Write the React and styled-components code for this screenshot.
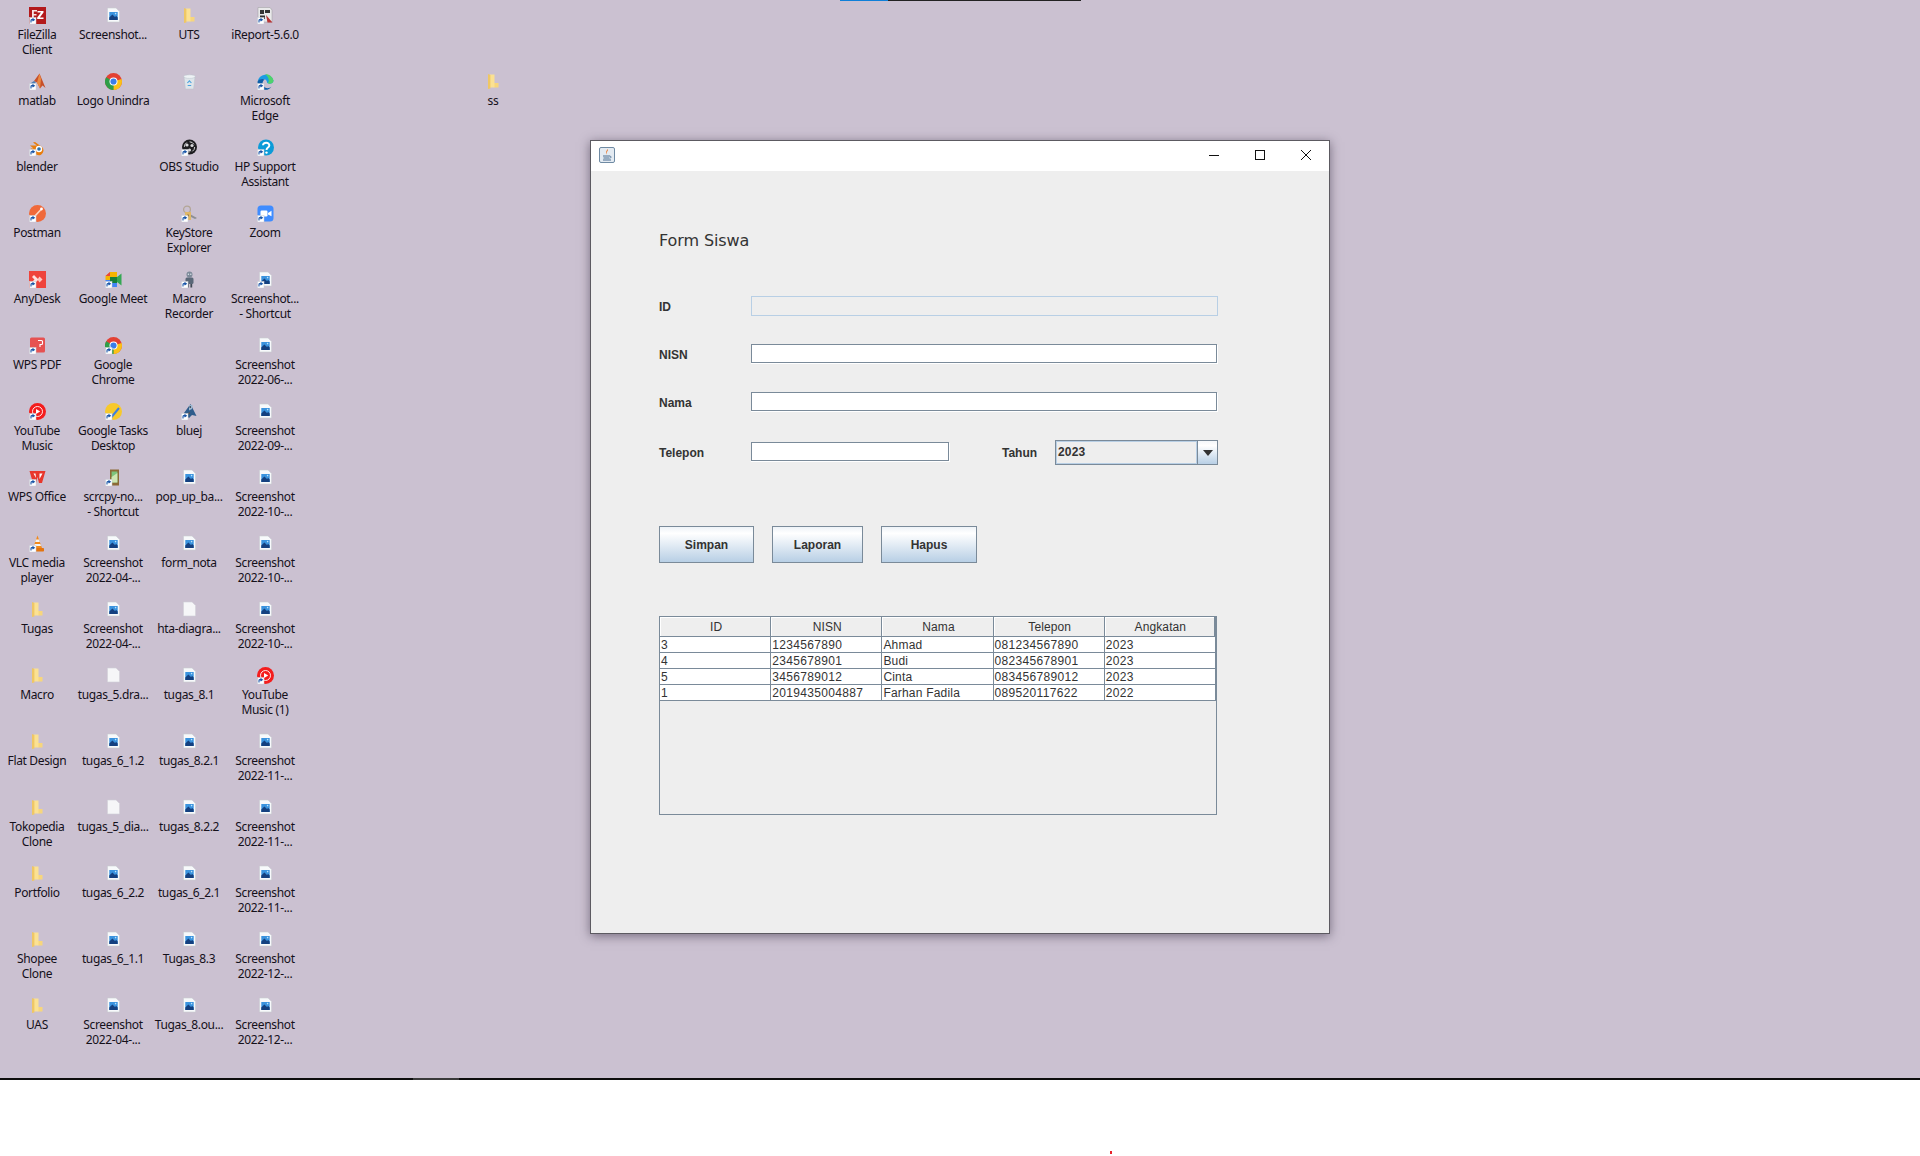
import React from 'react';
import styled, { createGlobalStyle } from 'styled-components';

const GlobalStyle = createGlobalStyle`
  html, body {
    margin: 0;
    padding: 0;
    background: #fff;
  }
  body {
    width: 1920px;
    height: 1156px;
    overflow: hidden;
    font-family: 'Liberation Sans', Arial, sans-serif;
  }
`;

const Shortcut = () => (
  <g>
    <rect x="0.5" y="10.5" width="6.5" height="6.5" fill="#fff" stroke="#c8ccd4" strokeWidth="0.5" />
    <path d="M2 15.5 V13.5 Q2 12.6 3 12.6 H4.2 M3.5 11.4 L5.3 12.7 L3.5 14" fill="none" stroke="#1a56a8" strokeWidth="1.1" />
  </g>
);

const ImageFile = () => (
  <g>
    <path d="M2.5 1 H11 L14.5 4.5 V15 H2.5 Z" fill="#f7f9fb" stroke="#c9ccd2" strokeWidth="0.6" />
    <rect x="4.3" y="5" width="8.4" height="8" fill="#3a93de" />
    <path d="M4.3 13 V10.5 L7.4 7.6 L10 10 L11.2 9 L12.7 10.4 V13 Z" fill="#14407f" />
    <circle cx="10.6" cy="6.6" r="0.8" fill="#bfe3fa" />
  </g>
);

const BlankFile = () => (
  <path d="M2.5 1 H11 L14.5 4.5 V15 H2.5 Z" fill="#f6f6f8" stroke="#d2d2d8" strokeWidth="0.6" />
);

const Folder = () => (
  <g>
    <path d="M9 10 H13.5 V14.5 H9 Z" fill="#f7d67c" />
    <path d="M5 1.5 H9.5 V14.5 H5 Z" fill="#fbe193" />
    <path d="M3 1 L5.4 2 V15.4 L3 16 Z" fill="#efc765" />
  </g>
);

const drawings = {
  image: <ImageFile />,
  blank: <BlankFile />,
  folder: <Folder />,
  filezilla: (
    <g>
      <rect x="0" y="0" width="17" height="17" fill="#b3191b" />
      <path d="M3 3 H8 V4.5 H4.8 V7 H7.5 V8.5 H4.8 V12 H3 Z" fill="#f8e3e3" />
      <path d="M8.5 4 H14.5 V5.4 L10.8 10.5 H14.5 V12 H8.2 V10.6 L12 5.5 H8.5 Z" fill="#fff" />
    </g>
  ),
  ireport: (
    <g>
      <path d="M1 0.5 H13 L15 3 V15 H1 Z" fill="#e9e9ea" stroke="#9a9a9d" strokeWidth="0.5" />
      <path d="M3 3 H7 V7 H3 Z M8 3 H13 V6 H8 Z M3 8.5 H8 V12 H3 Z" fill="#333" />
      <path d="M9 8 L15.5 15.5 H10.5 Z" fill="#b83434" />
    </g>
  ),
  matlab: (
    <g>
      <path d="M0.5 11 L5 8 L7 9 L4 12.5 Z" fill="#4a7fb5" />
      <path d="M5 8 L10.5 0.5 L16.5 15 L13.5 12.5 L11 15.5 L8 9.5 Z" fill="#c8502a" />
      <path d="M10.5 0.5 L8 9.5 L11 15.5 L12 6 Z" fill="#e98a42" />
    </g>
  ),
  chrome: (
    <g>
      <circle cx="8.5" cy="8.5" r="8.5" fill="#e34133" />
      <path d="M8.5 8.5 L16.6 6 A8.5 8.5 0 0 1 8 17 Z" fill="#fbc116" />
      <path d="M8.5 8.5 L8.6 17 A8.5 8.5 0 0 1 1.2 4.2 Z" fill="#2f9e48" />
      <circle cx="8.5" cy="8.5" r="4" fill="#fff" />
      <circle cx="8.5" cy="8.5" r="3.1" fill="#3a7de8" />
    </g>
  ),
  recycle: (
    <g>
      <path d="M3 4 H14 L12.6 16 H4.4 Z" fill="#dfe5ea" stroke="#b9c2ca" strokeWidth="0.5" />
      <ellipse cx="8.5" cy="3.6" rx="5.8" ry="1.8" fill="#eef2f5" stroke="#b9c2ca" strokeWidth="0.5" />
      <path d="M6.4 10 L8.4 7.8 L10.4 10 M6.7 12.5 H10.2" fill="none" stroke="#4aa3df" strokeWidth="1.1" />
    </g>
  ),
  edge: (
    <g>
      <path d="M0.5 9 A8.2 8.2 0 0 1 16.5 7.5 C16.5 11 11 11.5 10 9.5 C10 7 8 5.5 5.5 6 C3 6.5 1 7.5 0.5 9 Z" fill="#1b9de2" />
      <path d="M8 1 A8.2 8.2 0 0 1 16.5 7.5 C16.5 11 12 11.4 10.5 10 C13 9 12 4 8 1 Z" fill="#4fd26b" />
      <path d="M0.5 9 C1 6.5 5 5 8 6.5 C5 7.5 4.6 12 8 14.5 C10.5 16 13 15 14.5 13.5 C12.5 17 8.5 17.5 5.5 16.2 C2.5 15 0.5 12.5 0.5 9 Z" fill="#0e5ea8" />
    </g>
  ),
  blender: (
    <g>
      <path d="M1 6.5 H8 L4 3.5 L6 3 L13 8 A4.8 4.8 0 1 1 5 12.5 L1.5 9.5 H4.5 Z" fill="#e87d0d" />
      <circle cx="10" cy="10" r="3.2" fill="#fff" />
      <circle cx="10" cy="10" r="1.8" fill="#2c6fa8" />
    </g>
  ),
  obs: (
    <g>
      <circle cx="8.5" cy="8" r="7.5" fill="#1d1d20" />
      <circle cx="8.5" cy="8" r="5.2" fill="none" stroke="#e4e4e6" strokeWidth="0.9" strokeDasharray="5 3" />
      <circle cx="6" cy="6" r="1.6" fill="#d8d8da" />
      <circle cx="11" cy="6.5" r="1.6" fill="#d8d8da" />
      <circle cx="8.5" cy="11" r="1.6" fill="#d8d8da" />
    </g>
  ),
  hp: (
    <g>
      <circle cx="9" cy="8.5" r="8" fill="#0c9bd8" />
      <path d="M6 6.3 C6 2.8 12.5 2.8 12.3 6.5 C12.2 8.6 9.6 8.6 9.5 11" fill="none" stroke="#fff" strokeWidth="2" />
      <circle cx="9.5" cy="13.6" r="1.2" fill="#fff" />
    </g>
  ),
  postman: (
    <g>
      <circle cx="8.5" cy="8.5" r="8.5" fill="#f0693a" />
      <path d="M5 12 L12.5 4" stroke="#fbd7c6" strokeWidth="1.6" />
      <circle cx="12.5" cy="4" r="1.4" fill="#fff" />
    </g>
  ),
  keystore: (
    <g>
      <circle cx="6" cy="4.5" r="3.4" fill="none" stroke="#b3a696" strokeWidth="1.3" />
      <path d="M7 8 L16 13 L14 14 L6 10 Z" fill="#8d8f92" />
      <path d="M4 7 H10 V15 H4 Z" fill="#e0b868" />
      <circle cx="7" cy="10.5" r="1" fill="#7e5f24" />
    </g>
  ),
  zoom: (
    <g>
      <rect x="0.5" y="0.5" width="16" height="16" rx="3.5" fill="#3f8cff" />
      <rect x="3.5" y="5.5" width="7" height="6" rx="1.2" fill="#fff" />
      <path d="M11 8 L14.5 5.8 V11.2 L11 9.4 Z" fill="#fff" />
    </g>
  ),
  anydesk: (
    <g>
      <rect x="0" y="0" width="17" height="17" fill="#ef443b" />
      <path d="M5 4 L9.5 8.5 L5 13 L3 11 L5.5 8.5 L3 6 Z" fill="#fff" opacity="0.85" />
      <path d="M10.5 5.5 L13.5 8.5 L10.5 11.5 L8.5 8.5 Z" fill="#ffc9c4" />
    </g>
  ),
  meet: (
    <g>
      <path d="M0.5 5 L5 1 H12 V6 H5 V9 H0.5 Z" fill="#f4b400" />
      <path d="M0.5 5 L5 1 V5 Z" fill="#e8453c" />
      <path d="M0.5 9 H5 V12 H12 V16 H3 Q0.5 16 0.5 13.5 Z" fill="#4285f4" />
      <path d="M12 6 L16.5 2.5 V14.5 L12 11 Z" fill="#34a853" />
      <rect x="5" y="6" width="7" height="6" fill="#188038" />
    </g>
  ),
  macro: (
    <g>
      <circle cx="8.5" cy="3.5" r="3" fill="#7d8a99" />
      <rect x="4.5" y="6.5" width="8" height="6.5" rx="1.5" fill="#5a6878" />
      <rect x="6" y="13" width="1.8" height="3.5" fill="#404a55" />
      <rect x="9.4" y="13" width="1.8" height="3.5" fill="#404a55" />
      <circle cx="7.4" cy="3.2" r="0.7" fill="#dfe7ee" />
      <circle cx="9.8" cy="3.2" r="0.7" fill="#dfe7ee" />
    </g>
  ),
  wpspdf: (
    <g>
      <rect x="1" y="0.5" width="15" height="15" rx="1.5" fill="#e65252" />
      <path d="M9 3.5 H12.5 Q13.5 3.5 13.5 4.5 V6.5 Q13.5 7.5 12.5 7.5 H11 V10" fill="none" stroke="#fff" strokeWidth="1.1" />
    </g>
  ),
  ytmusic: (
    <g>
      <circle cx="8.5" cy="8.5" r="8.5" fill="#f41d1d" />
      <circle cx="8.5" cy="8.5" r="5" fill="none" stroke="#fff" strokeWidth="0.9" />
      <path d="M7 6 L11.2 8.5 L7 11 Z" fill="#fff" />
    </g>
  ),
  tasks: (
    <g>
      <circle cx="8.5" cy="8.5" r="8.5" fill="#f7c92b" />
      <path d="M3.5 12 L7 13.5 L14 5" fill="none" stroke="#3f7fe0" strokeWidth="2" />
    </g>
  ),
  bluej: (
    <g>
      <path d="M3 10 L9.5 1 L15.5 13 L11 12 L8 15 Z" fill="#2f5d8c" />
      <path d="M8 2 H11.5 L11 6 L8 7.5 Z" fill="#9ab7d1" />
      <circle cx="9.2" cy="4" r="0.8" fill="#111" />
      <path d="M3 12 L9 9 V11 Z" fill="#555" />
    </g>
  ),
  wps: (
    <g>
      <path d="M0.5 2 H16.5 L13 14 H10 L8.5 8 L7 14 H4 Z" fill="#e8372c" />
      <path d="M4.5 4.5 H6.5 L7 9 Z M10.5 4.5 H13.5 L10.5 10 Z" fill="#fff" />
    </g>
  ),
  scrcpy: (
    <g>
      <rect x="5" y="0.5" width="9" height="16" fill="#8c6a36" />
      <rect x="6.6" y="2.5" width="5.8" height="11" fill="#7cc47c" />
      <path d="M6.6 8 L12.4 4 V13.5 H6.6 Z" fill="#cfe6b4" />
    </g>
  ),
  vlc: (
    <g>
      <path d="M8.5 0.5 L13 13 H4 Z" fill="#f28a1c" />
      <path d="M7 4.5 H10 L10.8 7 H6.2 Z M5.6 9 H11.4 L12 11 H5 Z" fill="#f3f3f3" />
      <rect x="2" y="13" width="13" height="3.5" rx="0.8" fill="#e3740f" />
    </g>
  ),
};

const noShortcut = new Set(['image', 'blank', 'folder', 'recycle']);

const icon = (kind, label, plain) => ({ kind, label, plain });
const shot = (date) => icon('image', `Screenshot\n2022-${date}-...`);

const rows = [
  [icon('filezilla', 'FileZilla\nClient'), icon('image', 'Screenshot...'), icon('folder', 'UTS'), icon('ireport', 'iReport-5.6.0')],
  [icon('matlab', 'matlab'), icon('chrome', 'Logo Unindra', true), icon('recycle', ''), icon('edge', 'Microsoft\nEdge')],
  [icon('blender', 'blender'), null, icon('obs', 'OBS Studio'), icon('hp', 'HP Support\nAssistant')],
  [icon('postman', 'Postman'), null, icon('keystore', 'KeyStore\nExplorer'), icon('zoom', 'Zoom')],
  [icon('anydesk', 'AnyDesk'), icon('meet', 'Google Meet'), icon('macro', 'Macro\nRecorder'), { ...icon('image', 'Screenshot...\n- Shortcut'), forced: true }],
  [icon('wpspdf', 'WPS PDF'), icon('chrome', 'Google\nChrome'), null, shot('06')],
  [icon('ytmusic', 'YouTube\nMusic'), icon('tasks', 'Google Tasks\nDesktop'), icon('bluej', 'bluej'), shot('09')],
  [icon('wps', 'WPS Office'), icon('scrcpy', 'scrcpy-no...\n- Shortcut'), icon('image', 'pop_up_ba...'), shot('10')],
  [icon('vlc', 'VLC media\nplayer'), shot('04'), icon('image', 'form_nota'), shot('10')],
  [icon('folder', 'Tugas'), shot('04'), icon('blank', 'hta-diagra...'), shot('10')],
  [icon('folder', 'Macro'), icon('blank', 'tugas_5.dra...'), icon('image', 'tugas_8.1'), icon('ytmusic', 'YouTube\nMusic (1)')],
  [icon('folder', 'Flat Design'), icon('image', 'tugas_6_1.2'), icon('image', 'tugas_8.2.1'), shot('11')],
  [icon('folder', 'Tokopedia\nClone'), icon('blank', 'tugas_5_dia...'), icon('image', 'tugas_8.2.2'), shot('11')],
  [icon('folder', 'Portfolio'), icon('image', 'tugas_6_2.2'), icon('image', 'tugas_6_2.1'), shot('11')],
  [icon('folder', 'Shopee\nClone'), icon('image', 'tugas_6_1.1'), icon('image', 'Tugas_8.3'), shot('12')],
  [icon('folder', 'UAS'), shot('04'), icon('image', 'Tugas_8.ou...'), shot('12')],
];

const students = [
  ['3', '1234567890', 'Ahmad', '081234567890', '2023'],
  ['4', '2345678901', 'Budi', '082345678901', '2023'],
  ['5', '3456789012', 'Cinta', '083456789012', '2023'],
  ['1', '2019435004887', 'Farhan Fadila', '089520117622', '2022'],
];

const Page = styled.div`
  width: 1920px;
  height: 1156px;
  display: flex;
  flex-direction: column;
`;

const Desktop = styled.div`
  position: relative;
  height: 1078px;
  background: #cbc1d1;
  overflow: hidden;
`;

const TopStrip = styled.div`
  position: absolute;
  top: 0;
  left: 840px;
  width: 241px;
  height: 1px;
  background: linear-gradient(to right, #0f7fd8 48px, #222 48px);
`;

const IconGrid = styled.div`
  display: grid;
  margin-left: -1px;
  grid-template-columns: repeat(7, 76px);
  grid-auto-rows: 66px;
`;

const DesktopIcon = styled.div`
  grid-column: ${(p) => p.$col};
  grid-row: ${(p) => p.$row};
  display: flex;
  flex-direction: column;
  align-items: center;
  padding-top: 7px;
  box-sizing: border-box;
`;

const IconLabel = styled.div`
  margin-top: 3px;
  width: 76px;
  text-align: center;
  white-space: pre;
  font: 12px/15px 'Noto Sans', 'Open Sans', sans-serif;
  letter-spacing: -0.35px;
  color: #14101a;
`;

const FormWindow = styled.div`
  position: absolute;
  left: 590px;
  top: 140px;
  width: 740px;
  height: 794px;
  box-sizing: border-box;
  border: 1px solid #5c5a61;
  background: #eeeeee;
  box-shadow: 0 2px 10px rgba(50, 40, 60, 0.55);
  display: flex;
  flex-direction: column;
`;

const TitleBar = styled.div`
  height: 30px;
  flex: none;
  box-sizing: border-box;
  display: flex;
  align-items: center;
  justify-content: space-between;
  background: #fff;
  padding: 0 0 2px 8px;
`;

const WindowButtons = styled.div`
  display: flex;
`;

const WindowButton = styled.div`
  width: 46px;
  height: 28px;
  display: flex;
  align-items: center;
  justify-content: center;
`;

const FormBody = styled.div`
  padding: 58px 111px 0 68px;
  display: flex;
  flex-direction: column;
`;

const FormTitle = styled.div`
  font: 16px/24px 'DejaVu Sans', sans-serif;
  letter-spacing: -0.1px;
  color: #333;
  margin-bottom: 43px;
`;

const FieldRow = styled.div`
  display: flex;
  align-items: center;
  height: ${(p) => p.$height || 20}px;
  margin-bottom: ${(p) => p.$gap || 0}px;
`;

const FieldLabel = styled.label`
  width: ${(p) => p.$width || 92}px;
  margin-left: ${(p) => p.$indent || 0}px;
  padding-top: ${(p) => p.$drop || 0}px;
  flex: none;
  font: bold 12px/14px 'Liberation Sans', Arial, sans-serif;
  color: #333;
`;

const TextField = styled.div`
  width: ${(p) => p.$width}px;
  height: ${(p) => (p.$disabled ? 20 : 19)}px;
  box-sizing: border-box;
  border: 1px solid ${(p) => (p.$disabled ? '#b8cfe5' : '#7a8a99')};
  background: ${(p) => (p.$disabled ? '#eeeeee' : '#fff')};
  box-shadow: ${(p) => (p.$disabled ? 'none' : '0 1px 0 #fff, 1px 1px 0 #fff')};
  margin-bottom: ${(p) => p.$lift || 0}px;
`;

const Combo = styled.div`
  width: 163px;
  height: 25px;
  box-sizing: border-box;
  border: 1px solid #7a8a99;
  display: flex;
  background: #eeeeee;
  margin-left: auto;
`;

const ComboValue = styled.div`
  flex: 1;
  box-sizing: border-box;
  border: 1px solid #b8cfe5;
  padding-left: 1px;
  font: bold 12px/21px 'Liberation Sans', Arial, sans-serif;
  letter-spacing: 0.2px;
  color: #333;
`;

const ComboArrow = styled.div`
  width: 19px;
  flex: none;
  border-left: 1px solid #7a8a99;
  background: linear-gradient(#f4f7fa, #fff 20%, #b8cfe5);
  display: flex;
  align-items: center;
  justify-content: center;
  &::after {
    content: '';
    border-left: 5px solid transparent;
    border-right: 5px solid transparent;
    border-top: 6px solid #333;
    margin-top: 1px;
  }
`;

const ButtonRow = styled.div`
  display: flex;
  gap: 18px;
  margin-top: 61px;
  margin-bottom: 53px;
`;

const ActionButton = styled.button`
  width: ${(p) => p.$width}px;
  height: 37px;
  padding: 0;
  box-sizing: border-box;
  border: 1px solid #7a8a99;
  background: linear-gradient(#eef3f8, #fff 18%, #b8cfe5);
  font: bold 12px 'Liberation Sans', Arial, sans-serif;
  color: #333;
`;

const TableFrame = styled.div`
  width: 558px;
  height: 199px;
  box-sizing: border-box;
  border: 1px solid #7a8a99;
  background: #eeeeee;
`;

const DataTable = styled.table`
  width: 100%;
  table-layout: fixed;
  border-collapse: separate;
  border-spacing: 0;
  font: 12px 'Liberation Sans', Arial, sans-serif;
  color: #333;
`;

const HeadCell = styled.th`
  height: 20px;
  padding: 1px 0 0 2px;
  box-sizing: border-box;
  font-weight: normal;
  line-height: 14px;
  text-align: center;
  letter-spacing: 0.1px;
  background: #eeeeee;
  border-bottom: 1px solid #7a8a99;
  border-right: 1px solid #7a8a99;
  box-shadow: inset 1px 1px 0 #fff;
  &:last-child {
    border-right-width: 2px;
  }
`;

const DataCell = styled.td`
  height: 16px;
  padding: 1px 0 0 1px;
  box-sizing: border-box;
  line-height: 14px;
  letter-spacing: ${(p) => (p.$text ? 0.2 : 0.33)}px;
  white-space: nowrap;
  background: #fff;
  border-bottom: 1px solid #7a8a99;
  border-right: 1px solid #7a8a99;
`;

const DarkBar = styled.div`
  height: 2px;
  flex: none;
  background: #0d0d0d;
  padding-left: 413px;
  &::before {
    content: '';
    display: block;
    width: 46px;
    height: 2px;
    background: #3a3a3a;
  }
`;

const BottomArea = styled.div`
  flex: 1;
  background: #fff;
  padding: 71px 0 0 1110px;
`;

const RedDot = styled.div`
  width: 2px;
  height: 3px;
  background: #e8222a;
`;

const JavaIcon = () => (
  <svg width="16" height="16" viewBox="0 0 16 16">
    <rect x="0.5" y="0.5" width="15" height="15" rx="1.5" fill="#e4ebf2" stroke="#6f8aa3" />
    <path d="M8.5 2 C10 4 6.5 5 8 7.5 C6 6 7.5 4 8.5 2 Z" fill="#e8752a" />
    <path d="M4 9 H11 M4.5 11 H10.5 M4 13 H12" stroke="#4d6f91" strokeWidth="1" />
    <path d="M11 9 Q13.5 9.5 11 11.5" fill="none" stroke="#4d6f91" strokeWidth="0.8" />
  </svg>
);

const App = () => (
  <Page>
    <GlobalStyle />
    <Desktop>
      <TopStrip />
      <IconGrid>
        {rows.map((row, r) =>
          row.map((item, c) =>
            item ? (
              <DesktopIcon key={`${r}-${c}`} $col={c + 1} $row={r + 1}>
                <svg width="17" height="17" viewBox="0 0 17 17">
                  {drawings[item.kind]}
                  {((!noShortcut.has(item.kind) && !item.plain) || item.forced) && <Shortcut />}
                </svg>
                <IconLabel>{item.label}</IconLabel>
              </DesktopIcon>
            ) : null
          )
        )}
        <DesktopIcon $col={7} $row={2}>
          <svg width="17" height="17" viewBox="0 0 17 17">
            {drawings.folder}
          </svg>
          <IconLabel>ss</IconLabel>
        </DesktopIcon>
      </IconGrid>

      <FormWindow>
        <TitleBar>
          <JavaIcon />
          <WindowButtons>
            <WindowButton>
              <svg width="12" height="12" viewBox="0 0 12 12">
                <path d="M1 6.5 H11" stroke="#111" strokeWidth="1" />
              </svg>
            </WindowButton>
            <WindowButton>
              <svg width="12" height="12" viewBox="0 0 12 12">
                <rect x="1.5" y="1.5" width="9" height="9" fill="none" stroke="#111" strokeWidth="1" />
              </svg>
            </WindowButton>
            <WindowButton>
              <svg width="12" height="12" viewBox="0 0 12 12">
                <path d="M1 1 L11 11 M11 1 L1 11" stroke="#111" strokeWidth="1" />
              </svg>
            </WindowButton>
          </WindowButtons>
        </TitleBar>
        <FormBody>
          <FormTitle>Form Siswa</FormTitle>
          <FieldRow $gap={28}>
            <FieldLabel $drop={2}>ID</FieldLabel>
            <TextField $disabled $width={467} />
          </FieldRow>
          <FieldRow $gap={28}>
            <FieldLabel $drop={2}>NISN</FieldLabel>
            <TextField $width={466} $lift={1} />
          </FieldRow>
          <FieldRow $gap={28}>
            <FieldLabel $drop={2}>Nama</FieldLabel>
            <TextField $width={466} $lift={1} />
          </FieldRow>
          <FieldRow $height={25}>
            <FieldLabel>Telepon</FieldLabel>
            <TextField $width={198} $lift={3} />
            <FieldLabel $width={53} $indent={53}>Tahun</FieldLabel>
            <Combo>
              <ComboValue>2023</ComboValue>
              <ComboArrow />
            </Combo>
          </FieldRow>
          <ButtonRow>
            <ActionButton $width={95}>Simpan</ActionButton>
            <ActionButton $width={91}>Laporan</ActionButton>
            <ActionButton $width={96}>Hapus</ActionButton>
          </ButtonRow>
          <TableFrame>
            <DataTable>
              <thead>
                <tr>
                  {['ID', 'NISN', 'Nama', 'Telepon', 'Angkatan'].map((h) => (
                    <HeadCell key={h}>{h}</HeadCell>
                  ))}
                </tr>
              </thead>
              <tbody>
                {students.map((s) => (
                  <tr key={s[0]}>
                    {s.map((v, i) => (
                      <DataCell key={i} $text={i === 2}>{v}</DataCell>
                    ))}
                  </tr>
                ))}
              </tbody>
            </DataTable>
          </TableFrame>
        </FormBody>
      </FormWindow>
    </Desktop>
    <DarkBar />
    <BottomArea>
      <RedDot />
    </BottomArea>
  </Page>
);

export default App;
